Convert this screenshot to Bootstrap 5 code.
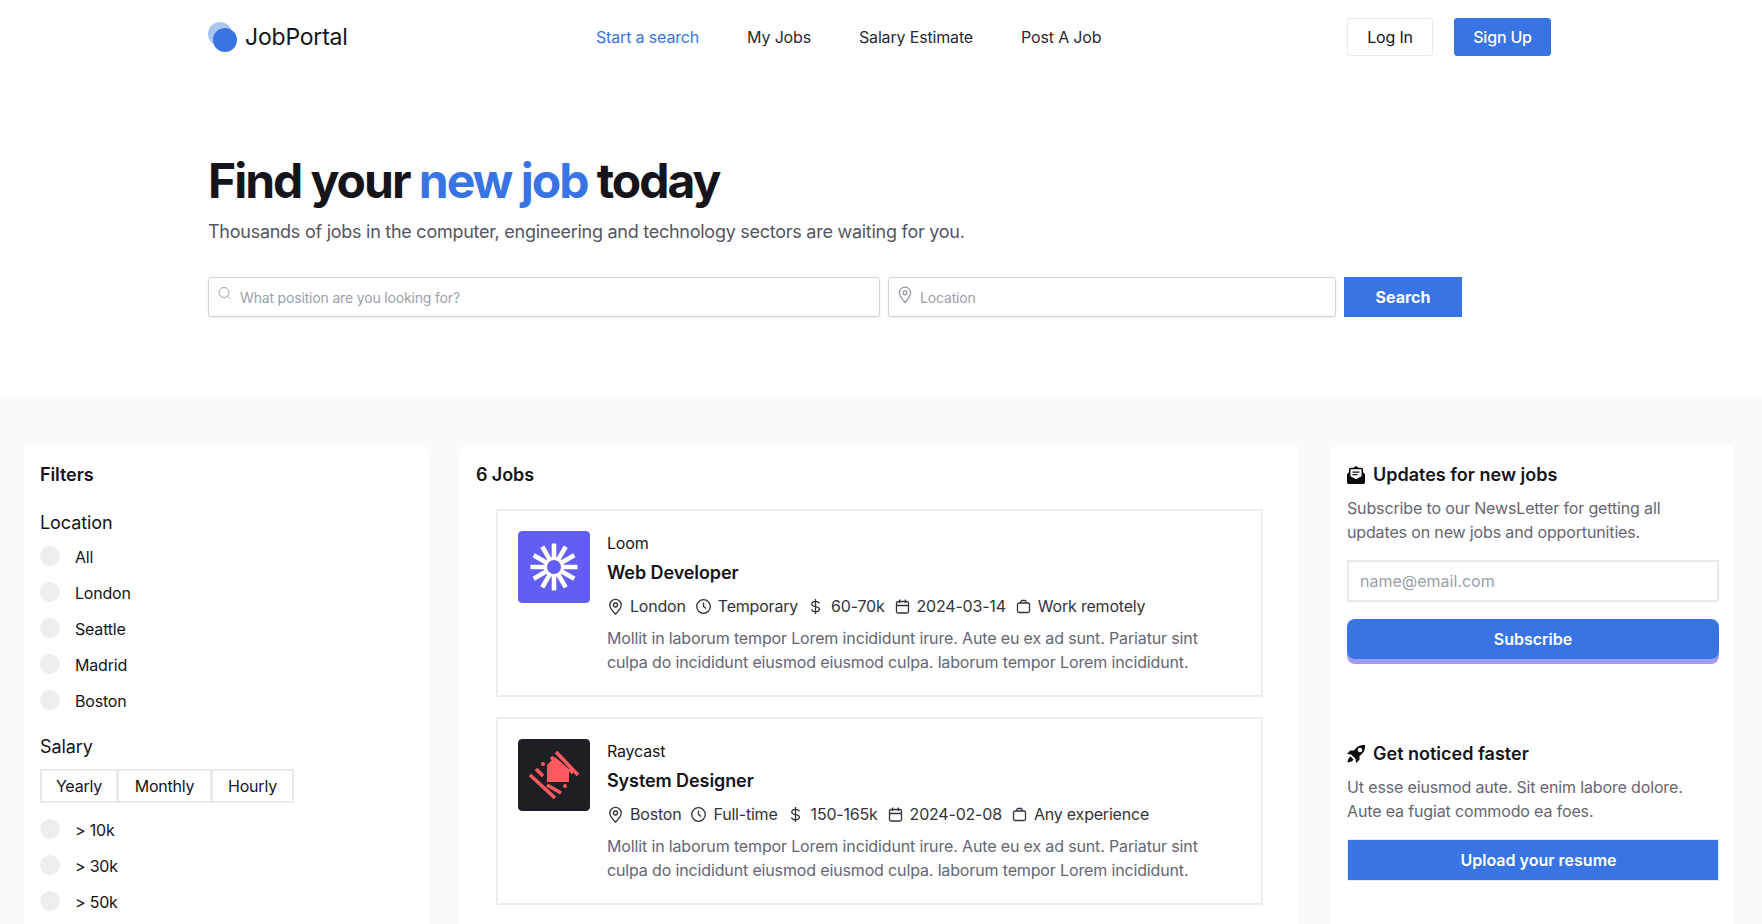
<!DOCTYPE html>
<html lang="en">
<head>
<meta charset="utf-8">
<title>JobPortal</title>
<link href="https://cdn.jsdelivr.net/npm/bootstrap@5.3.0/dist/css/bootstrap.min.css" rel="stylesheet">
<style>
html,body{height:924px;overflow:hidden}
body{font-family:"Inter","Noto Sans",sans-serif;font-size:16px;color:#15141a;background:#fff;letter-spacing:-.0125em}
.top-bar{height:74px;padding:0 211px 0 208px}
.brand-mark{position:relative;width:29px;height:30px;display:block}
.brand-mark i{position:absolute;border-radius:50%;width:24px;height:24px}
.brand-mark i:first-child{left:0;top:0;background:#a9c5f0}
.brand-mark i:last-child{left:5px;top:6px;background:#3874e3}
.brand-name{font-size:23px;color:#15141a;text-decoration:none;font-weight:400;margin-left:8px;width:351px}
.top-links{gap:48px}
.top-links a{color:#2a2a33;text-decoration:none;font-size:16px;padding:0;letter-spacing:-.01em}
.top-links a.on{color:#3874e3}
.btn-login,.btn-signup{height:38px;font-size:16px;padding:0;display:flex;align-items:center;justify-content:center;border-radius:3px}
.btn-login{width:86px;border:1px solid #e8e8ee;color:#15141a;background:#fff}
.btn-signup{width:97px;margin-left:21px;background:#3874e3;border:1px solid #3874e3;color:#fff;font-weight:500}
.hero-area{height:323px;padding:75px 0 0 208px}
.hero-area h1{font-size:48px;line-height:64px;font-weight:700;letter-spacing:-.042em;margin:0;color:#15141a}
.hero-area h1 span{color:#3874e3}
.hero-sub{font-size:18px;line-height:28px;color:#55555f;margin:5px 0 31px;letter-spacing:-.0146em}
.search-grid{display:grid;grid-template-columns:672px 448px 118px;gap:8px}
.field-wrap{position:relative}
.field-wrap svg{position:absolute;left:9px;top:9px}
.field-wrap .form-control{height:40px;border:1px solid #d2d4dd;border-radius:3px;padding-left:31px;font-size:14px;letter-spacing:-.012em;box-shadow:0 1px 2px rgba(20,20,40,.08)}
.form-control::placeholder{color:#9a9fac}
.btn-search{height:40px;background:#3874e3;color:#fff;border:0;border-radius:0;font-weight:700;font-size:16px}
.lower-area{height:527px;background:#fafafa;padding:48px 27px 0 24px;display:grid;grid-template-columns:404px 839px 404px;column-gap:32px}
.panel{background:#fff;border:0;border-radius:6px 6px 0 0;padding:16px;height:479px;overflow:hidden}
.panel>*{flex:none}
.panel-head{font-size:18px;font-weight:600;line-height:24px;margin:2px 0 0;color:#15141a;letter-spacing:-.005em}
.panel-head.jobs-head{margin-bottom:22px}
.sub-head{font-size:18px;font-weight:400;line-height:24px;margin:0;color:#15141a;letter-spacing:-.005em}
.sub-head.first-sub{margin-top:24px;margin-bottom:11px}
.sub-head.second-sub{margin-top:9px}
.radio-row{display:flex;align-items:flex-start;height:36px;margin:0;padding:0}
.radio-row .form-check-input{width:20px;height:20px;margin:0 15px 0 0;background-color:#eee;border:0;float:none;flex:none}
.radio-row label{line-height:24px;margin-top:-1px}
.period-group{display:flex;margin:10px 0 16px}
.period-group .btn{flex:none;height:34px;border:2px solid #e8e8ee;border-radius:0;padding:0;font-size:16px;letter-spacing:-.0125em;color:#15141a;background:#fff;margin-left:-2px}
.period-group .btn:first-child{margin-left:0}
.per-yearly{width:78px}
.per-monthly{width:95px}
.per-hourly{width:83px}
.job-card{margin:0 20px 20px 20px;border:2px solid #eee;border-radius:0;padding:20px;height:188px;display:flex;gap:17px}
.job-logo{width:72px;height:72px;border-radius:4px;flex:none}
.job-org{line-height:24px;margin:0 0 6px}
.job-title{font-size:18px;font-weight:600;line-height:24px;margin:0 0 9px;color:#15141a;letter-spacing:-.005em}
.job-meta{display:flex;gap:9px;line-height:24px;color:#33333c;margin-bottom:8px}
.job-meta span{display:flex;align-items:center;gap:6px}
.job-meta svg{flex:none}
.job-meta svg.money{margin-right:1px}
.job-text{line-height:24px;color:#666672;margin:0;letter-spacing:-.009em}
.side-head{display:flex;align-items:center;gap:8px;font-size:18px;font-weight:600;line-height:24px;margin:2px 0 0;color:#15141a;letter-spacing:0}
.side-text{line-height:24px;color:#666672;margin:9px 0 0;letter-spacing:-.009em}
.mail-input{height:42px;border:2px solid #e8e8ee;border-radius:0;margin-top:16px;font-size:16px;padding-left:11px}
.btn-sub{display:block;width:100%;height:40px;margin-top:17px;background:#3874e3;color:#fff;border:0;border-radius:8px;box-shadow:0 5px 0 #a29bf6;font-weight:600;font-size:16px}
.btn-up{display:block;width:372px;height:42px;background:#3874e3;color:#fff;border:1px solid #e8e8ee;border-radius:0;font-weight:600;font-size:16px;margin-top:16px;padding-left:23px}
.gap-block{margin-top:83px}
</style>
</head>
<body>
<nav class="top-bar d-flex align-items-center">
  <span class="brand-mark"><i></i><i></i></span>
  <a class="brand-name" href="#">JobPortal</a>
  <div class="top-links nav">
    <a class="on" href="#">Start a search</a>
    <a href="#">My Jobs</a>
    <a href="#">Salary Estimate</a>
    <a href="#">Post A Job</a>
  </div>
  <a class="btn btn-login ms-auto" href="#">Log In</a>
  <a class="btn btn-signup" href="#">Sign Up</a>
</nav>

<header class="hero-area">
  <h1>Find your <span>new job</span> today</h1>
  <p class="hero-sub">Thousands of jobs in the computer, engineering and technology sectors are waiting for you.</p>
  <form class="search-grid">
    <div class="field-wrap">
      <svg width="16" height="16" viewBox="0 0 16 16" fill="none" stroke="#9a9fac" stroke-width="1"><circle cx="7" cy="6.5" r="5"/><path d="M10.6 10.2l2.6 2.6"/></svg>
      <input class="form-control" placeholder="What position are you looking for?">
    </div>
    <div class="field-wrap">
      <svg width="16" height="18" viewBox="0 0 16 18" fill="none" stroke="#8d919e" stroke-width="1.2"><path d="M8 16.5C5 13 2.4 10.300 2.400 6.800a5.600 5.600 0 0 1 11.200 0C13.600 10.300 11 13 8 16.500z"/><circle cx="8" cy="6.800" r="2"/></svg>
      <input class="form-control" placeholder="Location">
    </div>
    <button type="button" class="btn btn-search">Search</button>
  </form>
</header>

<main class="lower-area">
  <aside class="card panel">
    <h5 class="panel-head">Filters</h5>
    <h6 class="sub-head first-sub">Location</h6>
    <div class="radio-row form-check"><input class="form-check-input" type="radio" name="loc" id="l1"><label for="l1">All</label></div>
    <div class="radio-row form-check"><input class="form-check-input" type="radio" name="loc" id="l2"><label for="l2">London</label></div>
    <div class="radio-row form-check"><input class="form-check-input" type="radio" name="loc" id="l3"><label for="l3">Seattle</label></div>
    <div class="radio-row form-check"><input class="form-check-input" type="radio" name="loc" id="l4"><label for="l4">Madrid</label></div>
    <div class="radio-row form-check"><input class="form-check-input" type="radio" name="loc" id="l5"><label for="l5">Boston</label></div>
    <h6 class="sub-head second-sub">Salary</h6>
    <div class="period-group btn-group">
      <button type="button" class="btn per-yearly">Yearly</button>
      <button type="button" class="btn per-monthly">Monthly</button>
      <button type="button" class="btn per-hourly">Hourly</button>
    </div>
    <div class="radio-row form-check"><input class="form-check-input" type="radio" name="sal" id="s1"><label for="s1">&gt; 10k</label></div>
    <div class="radio-row form-check"><input class="form-check-input" type="radio" name="sal" id="s2"><label for="s2">&gt; 30k</label></div>
    <div class="radio-row form-check"><input class="form-check-input" type="radio" name="sal" id="s3"><label for="s3">&gt; 50k</label></div>
  </aside>

  <section class="card panel">
    <h5 class="panel-head jobs-head">6 Jobs</h5>
    <article class="job-card">
      <svg class="job-logo" viewBox="0 0 72 72"><rect width="72" height="72" rx="4" fill="#625df5"/><g stroke="#fff" stroke-width="4.600"><path d="M36 12.500V59.500M12.500 36H59.500M24.300 15.700l23.400 40.600M15.700 24.300l40.600 23.400M15.700 47.700l40.600-23.400M24.300 56.300l23.400-40.600"/></g><circle cx="36" cy="36" r="10" fill="#fff"/><circle cx="36" cy="36" r="7" fill="#625df5"/></svg>
      <div>
        <p class="job-org">Loom</p>
        <h5 class="job-title">Web Developer</h5>
        <div class="job-meta">
          <span><svg width="17" height="17" viewBox="0 0 17 17" fill="none" stroke="#33333c" stroke-width="1.300"><path d="M8.500 16C6 13.500 2.800 10.800 2.800 7a5.700 5.700 0 0 1 11.400 0c0 3.800-3.200 6.500-5.700 9z"/><circle cx="8.500" cy="7" r="2"/></svg>London</span>
          <span><svg width="17" height="17" viewBox="0 0 17 17" fill="none" stroke="#33333c" stroke-width="1.300"><circle cx="8.500" cy="8.500" r="6.800"/><path d="M8.500 4.500v4l2.500 2"/></svg>Temporary</span>
          <span><svg class="money" width="17" height="17" viewBox="0 0 17 17" fill="none" stroke="#33333c" stroke-width="1.300"><path d="M12.300 5.500C12 3.900 10.500 3.300 8.500 3.300 6.300 3.300 4.800 4.300 4.800 6c0 3.800 7.600 1.500 7.600 5 0 1.700-1.600 2.700-3.900 2.700-2.100 0-3.600-.8-4-2.400M8.500 1v15"/></svg>60-70k</span>
          <span><svg width="17" height="17" viewBox="0 0 17 17" fill="none" stroke="#33333c" stroke-width="1.300"><rect x="2.500" y="3.500" width="12" height="11.500" rx="1.500"/><path d="M2.500 7.500h12M5.700 1.500v3.500M11.300 1.500v3.500"/></svg>2024-03-14</span>
          <span><svg width="17" height="17" viewBox="0 0 17 17" fill="none" stroke="#33333c" stroke-width="1.300"><rect x="2.500" y="5" width="12" height="9.500" rx="1.500"/><path d="M5.800 5V3.800A1.300 1.300 0 0 1 7.100 2.500h2.800a1.300 1.300 0 0 1 1.300 1.300V5"/></svg>Work remotely</span>
        </div>
        <p class="job-text">Mollit in laborum tempor Lorem incididunt irure. Aute eu ex ad sunt. Pariatur sint<br>culpa do incididunt eiusmod eiusmod culpa. laborum tempor Lorem incididunt.</p>
      </div>
    </article>
    <article class="job-card">
      <svg class="job-logo" viewBox="0 0 72 72"><rect width="72" height="72" rx="4" fill="#1e1f24"/><polygon fill="#ff5a5f" points="29,26 37,18 51,30 51,43 29,43"/><g stroke="#ff5a5f" stroke-width="3.600" fill="none"><path d="M38 13L60 36M33 18L38 23M51 30L55 34M12 36L37 59M18 30L25 37M29 46L43 54"/></g><circle cx="25" cy="25" r="2" fill="#ff5a5f"/><circle cx="47" cy="47" r="2" fill="#ff5a5f"/></svg>
      <div>
        <p class="job-org">Raycast</p>
        <h5 class="job-title">System Designer</h5>
        <div class="job-meta">
          <span><svg width="17" height="17" viewBox="0 0 17 17" fill="none" stroke="#33333c" stroke-width="1.300"><path d="M8.500 16C6 13.500 2.800 10.800 2.800 7a5.700 5.700 0 0 1 11.400 0c0 3.800-3.200 6.500-5.700 9z"/><circle cx="8.500" cy="7" r="2"/></svg>Boston</span>
          <span><svg width="17" height="17" viewBox="0 0 17 17" fill="none" stroke="#33333c" stroke-width="1.300"><circle cx="8.500" cy="8.500" r="6.800"/><path d="M8.500 4.500v4l2.500 2"/></svg>Full-time</span>
          <span><svg class="money" width="17" height="17" viewBox="0 0 17 17" fill="none" stroke="#33333c" stroke-width="1.300"><path d="M12.300 5.500C12 3.900 10.500 3.300 8.500 3.300 6.300 3.300 4.800 4.300 4.800 6c0 3.800 7.600 1.500 7.600 5 0 1.700-1.600 2.700-3.900 2.700-2.100 0-3.600-.8-4-2.400M8.500 1v15"/></svg>150-165k</span>
          <span><svg width="17" height="17" viewBox="0 0 17 17" fill="none" stroke="#33333c" stroke-width="1.300"><rect x="2.500" y="3.500" width="12" height="11.500" rx="1.500"/><path d="M2.500 7.500h12M5.700 1.500v3.500M11.300 1.500v3.500"/></svg>2024-02-08</span>
          <span><svg width="17" height="17" viewBox="0 0 17 17" fill="none" stroke="#33333c" stroke-width="1.300"><rect x="2.500" y="5" width="12" height="9.500" rx="1.500"/><path d="M5.800 5V3.800A1.300 1.300 0 0 1 7.100 2.500h2.800a1.300 1.300 0 0 1 1.300 1.300V5"/></svg>Any experience</span>
        </div>
        <p class="job-text">Mollit in laborum tempor Lorem incididunt irure. Aute eu ex ad sunt. Pariatur sint<br>culpa do incididunt eiusmod eiusmod culpa. laborum tempor Lorem incididunt.</p>
      </div>
    </article>
  </section>

  <aside class="card panel">
    <h5 class="side-head"><svg width="18" height="18" viewBox="0 0 18 18" fill="#0c0c10"><path d="M9 0l2.500 1.700H14.500c.8 0 1.500.7 1.500 1.500v3L18 8v8.200c0 1-.8 1.800-1.800 1.800H1.800C.8 18 0 17.200 0 16.200V8l2-1.800v-3c0-.8.700-1.500 1.500-1.500h3z"/><path fill="#fff" d="M3.500 3.200h11v7L9 13.300 3.500 10.200zM5.500 5.500v1.200h7V5.500zM5.500 8v1.200h5V8z"/></svg>Updates for new jobs</h5>
    <p class="side-text">Subscribe to our NewsLetter for getting all<br>updates on new jobs and opportunities.</p>
    <input class="form-control mail-input" placeholder="name@email.com">
    <button type="button" class="btn btn-sub">Subscribe</button>
    <h5 class="side-head gap-block"><svg width="18" height="18" viewBox="0 0 18 18" fill="#0c0c10"><path d="M18 0c-4-.3-7.500.9-10 4.200L7 5.500H3.200L0 9l4.200.5L8.500 13.800l.5 4.200 3.500-3.200V11l1.300-1C17.100 7.500 18.300 4 18 0zm-5 7.200a2.200 2.200 0 1 1 0-4.400 2.200 2.200 0 0 1 0 4.400z"/><path d="M3.500 11.500C2 12 1 14.500.5 17.500c3-.5 5.500-1.500 6-3z"/></svg>Get noticed faster</h5>
    <p class="side-text">Ut esse eiusmod aute. Sit enim labore dolore.<br>Aute ea fugiat commodo ea foes.</p>
    <button type="button" class="btn btn-up">Upload your resume</button>
  </aside>
</main>
<script src="https://cdn.jsdelivr.net/npm/bootstrap@5.3.0/dist/js/bootstrap.bundle.min.js"></script>
</body>
</html>
